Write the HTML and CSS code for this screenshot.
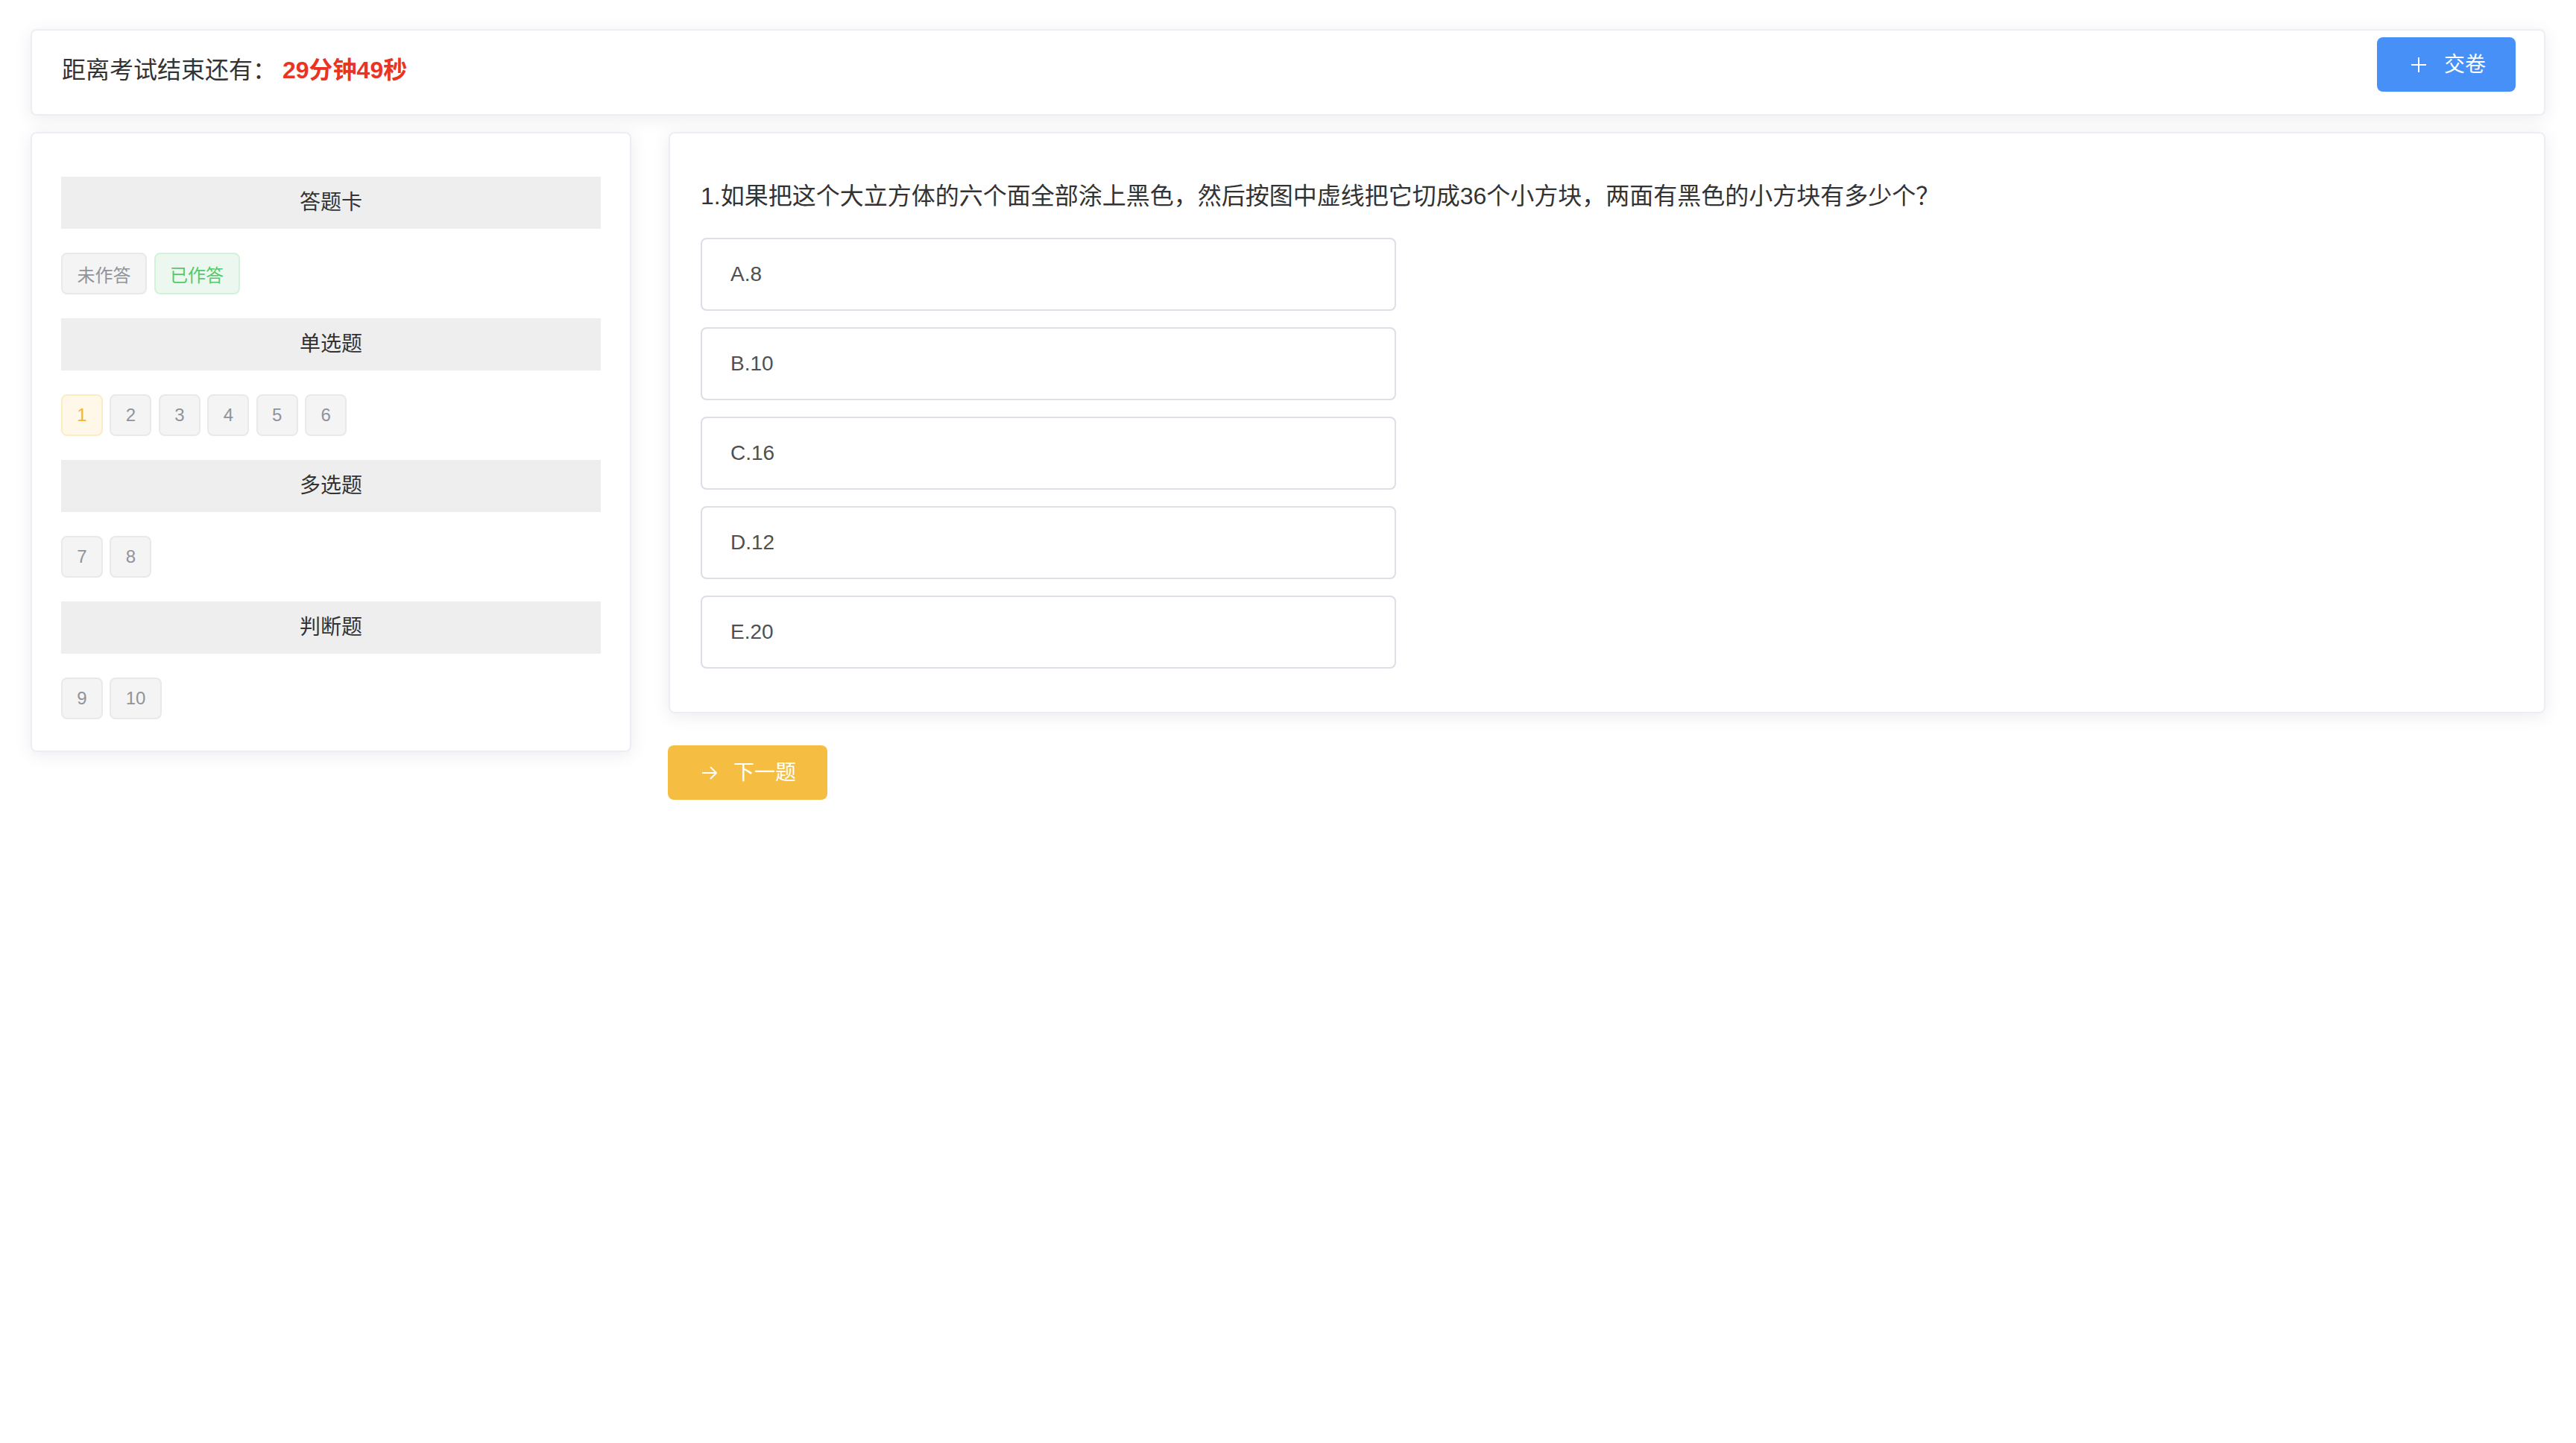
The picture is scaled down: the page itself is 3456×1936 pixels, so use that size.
FILE: index.html
```html
<!DOCTYPE html>
<html lang="zh-CN">
<head>
<meta charset="utf-8">
<title>考试</title>
<link rel="stylesheet" href="styles.css">
</head>
<body>
<div class="page">
  <div class="card header">
    <div class="timer">距离考试结束还有：<span class="time">29分钟49秒</span></div>
    <button class="btn btn-blue">
      <svg class="ico" width="22" height="22" viewBox="0 0 22 22"><path d="M11 1V21M1 11H21" stroke="#fff" stroke-width="2" fill="none"/></svg>
      <span>交卷</span>
    </button>
  </div>

  <div class="content">
    <aside class="card sidebar">
      <div class="sec-title">答题卡</div>
      <div class="chips">
        <span class="tag tag-gray">未作答</span>
        <span class="tag tag-green">已作答</span>
      </div>
      <div class="sec-title">单选题</div>
      <div class="chips">
        <span class="num num-yellow">1</span>
        <span class="num">2</span>
        <span class="num">3</span>
        <span class="num">4</span>
        <span class="num">5</span>
        <span class="num">6</span>
      </div>
      <div class="sec-title">多选题</div>
      <div class="chips">
        <span class="num">7</span>
        <span class="num">8</span>
      </div>
      <div class="sec-title">判断题</div>
      <div class="chips">
        <span class="num">9</span>
        <span class="num">10</span>
      </div>
    </aside>

    <main class="maincol">
      <div class="card question">
        <div class="q-text">1.如果把这个大立方体的六个面全部涂上黑色，然后按图中虚线把它切成36个小方块，两面有黑色的小方块有多少个？</div>
        <div class="options">
          <div class="option">A.8</div>
          <div class="option">B.10</div>
          <div class="option">C.16</div>
          <div class="option">D.12</div>
          <div class="option">E.20</div>
        </div>
      </div>
      <div class="actions">
        <button class="btn btn-yellow">
          <svg class="ico" width="21" height="20" viewBox="0 0 21 20"><path d="M1 10H20M12 2L20 10L12 18" stroke="#fff" stroke-width="2" fill="none"/></svg>
          <span>下一题</span>
        </button>
      </div>
    </main>
  </div>
</div>
</body>
</html>
```

FILE: styles.css
```css
* { box-sizing: border-box; }

html, body {
  margin: 0;
  padding: 0;
  background: #ffffff;
  font-family: "Liberation Sans", "Noto Sans CJK SC", sans-serif;
  color: #333333;
}

.page {
  padding: 39px 41px 0 41px;
}

.card {
  background: #ffffff;
  border: 2px solid #ebeef5;
  border-radius: 8px;
  box-shadow: 0 4px 24px rgba(0, 0, 0, 0.08);
}

.header {
  height: 116px;
  display: flex;
  justify-content: space-between;
  align-items: flex-start;
  padding: 9px 38px 0 40px;
}

.timer {
  align-self: center;
  margin-top: -16px;
  font-size: 32px;
  line-height: 44px;
  color: #333333;
}

.time {
  margin-left: 8px;
  color: #ea3323;
  font-weight: 700;
}

.btn {
  display: inline-flex;
  align-items: center;
  height: 73px;
  border: none;
  border-radius: 8px;
  color: #ffffff;
  font-family: "Liberation Sans", "Noto Sans CJK SC", sans-serif;
  font-size: 28px;
  line-height: 28px;
  cursor: pointer;
}

.btn-blue {
  background: #4690f8;
  padding: 0 40px 0 45px;
  gap: 23px;
}

.btn-yellow {
  background: #f5be43;
  padding: 0 42px 0 45px;
  gap: 22px;
}

.ico { display: block; flex: none; }

.content {
  margin-top: 22px;
  display: flex;
  align-items: flex-start;
  gap: 50px;
}

.sidebar {
  width: 806px;
  flex: none;
  padding: 58px 39px 10px 39px;
}

.sec-title {
  height: 70px;
  line-height: 70px;
  background: #eeeeee;
  text-align: center;
  font-size: 28px;
  color: #333333;
}

.chips {
  display: flex;
  padding: 32px 0;
  gap: 9.5px;
}

.tag {
  display: inline-flex;
  align-items: center;
  height: 56px;
  padding: 0 19.5px;
  border: 2px solid #e9e9eb;
  border-radius: 8px;
  background: #f4f4f5;
  color: #909399;
  font-size: 24px;
}

.tag-gray {}

.tag-green {
  background: #ecf8ef;
  border-color: #d3f2da;
  color: #55c86a;
}

.num {
  display: inline-flex;
  align-items: center;
  height: 56px;
  padding: 0 19.3px;
  border: 2px solid #e9e9eb;
  border-radius: 8px;
  background: #f4f4f5;
  color: #909399;
  font-size: 24px;
}

.num-yellow {
  background: #fff8e8;
  border-color: #fcecc4;
  color: #f0b53a;
}

.maincol {
  flex: 1;
  min-width: 0;
}

.question {
  padding: 60px 41px 58px 41px;
}

.q-text {
  font-size: 32px;
  line-height: 48px;
  color: #333333;
}

.options {
  margin-top: 32px;
  display: flex;
  flex-direction: column;
  gap: 22px;
}

.option {
  width: 933px;
  height: 98px;
  border: 2px solid #dcdfe6;
  border-radius: 8px;
  padding: 0 38px;
  display: flex;
  align-items: center;
  font-size: 28px;
  color: #505050;
}

.actions {
  margin-top: 43px;
  margin-left: -1px;
}
```
